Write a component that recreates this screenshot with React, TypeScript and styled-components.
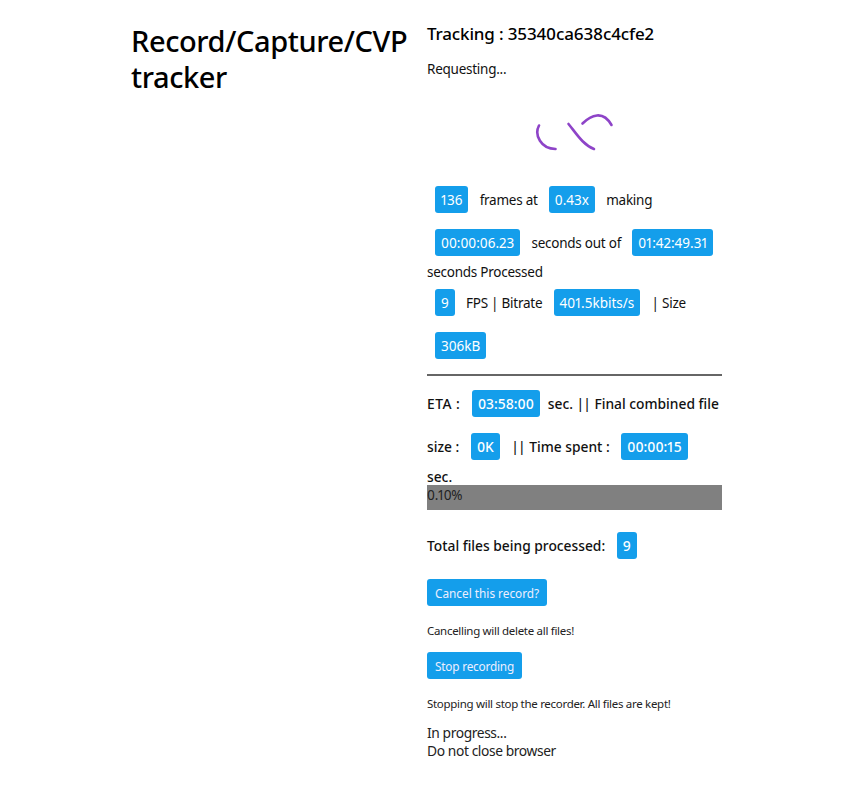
import React from 'react';
import styled, { createGlobalStyle } from 'styled-components';

const GlobalStyle = createGlobalStyle`
  body {
    margin: 0;
    background: #fff;
    color: #111;
    font-family: "Noto Sans", "Open Sans", sans-serif;
    font-size: 13.5px;
    letter-spacing: -0.25px;
    line-height: 20px;
    font-variant-numeric: proportional-nums;
  }
`;

const Page = styled.div`
  display: grid;
  grid-template-columns: 295px 295px;
  justify-content: center;
  padding-top: 23px;
`;

const Title = styled.h1`
  margin: 0 0 0 -1px;
  font-size: 29px;
  letter-spacing: -0.4px;
  line-height: 36px;
  font-weight: 500;
  color: #000;
`;

const Side = styled.div`
  display: flex;
  flex-direction: column;
`;

const Heading = styled.h2`
  margin: 0 0 14px;
  font-size: 17px;
  letter-spacing: -0.15px;
  line-height: 22px;
  font-weight: 500;
  color: #000;
`;

const Note = styled.div`
  line-height: 20px;
`;

const Spinner = styled.svg`
  display: block;
  width: 80px;
  height: 44px;
  margin: 31px auto 24px;
`;

const Stats = styled.div<{ $bold?: boolean }>`
  line-height: 17px;
  font-weight: ${(p) => (p.$bold ? 500 : 400)};
  font-size: ${(p) => (p.$bold ? '13.8px' : '13.5px')};
  letter-spacing: ${(p) => (p.$bold ? '0' : '-0.25px')};
  color: #111;
`;

const Badge = styled.span<{ $bold?: boolean }>`
  display: inline-block;
  margin: 8px;
  padding: 3.5px 6px;
  border-radius: 3px;
  background: #149eeb;
  color: #fff;
  line-height: 20px;
  letter-spacing: 0;
  font-weight: ${(p) => (p.$bold ? 500 : 400)};
`;

const Label = styled.span`
  letter-spacing: 0.5px;
`;

const Bars = styled.span`
  letter-spacing: -1px;
  margin-right: 1px;
`;

const Rule = styled.hr`
  width: 100%;
  margin: 7px 0 6px;
  border: 0;
  border-top: 2px solid #666;
`;

const Progress = styled.div`
  height: 25px;
  background: #808080;
  color: #222;
  line-height: 20px;
`;

const Total = styled.div`
  margin: 14px 0 0;
  font-size: 13.8px;
  letter-spacing: 0;
  font-weight: 500;
`;

const Action = styled.button<{ $tight?: boolean }>`
  display: block;
  padding: 0 8px;
  height: 27px;
  border: 0;
  border-radius: 3px;
  background: #149eeb;
  color: #eef;
  font-family: inherit;
  font-size: 11.8px;
  letter-spacing: ${(p) => (p.$tight ? '-0.2px' : '0')};
`;

const ActionRow = styled.div`
  margin-top: 12px;
`;

const Hint = styled.p`
  margin: 16px 0 0;
  font-size: 11.5px;
  letter-spacing: -0.3px;
  line-height: 18px;
  color: #222;
`;

const Status = styled.div`
  margin-top: 11px;
  font-size: 13.8px;
  letter-spacing: -0.4px;
  line-height: 18px;
  color: #222;
`;

export default function App() {
  return (
    <>
      <GlobalStyle />
      <Page>
        <Title>Record/Capture/CVP tracker</Title>
        <Side>
          <Heading>Tracking : 35340ca638c4cfe2</Heading>
          <Note>Requesting...</Note>
          <Spinner viewBox="0 0 80 44" fill="none" stroke="#8e44c8" strokeWidth="2.6" strokeLinecap="round">
            <path d="M4 15.5C-1 25 6 39 20.5 39" />
            <path d="M33.5 14C41 23 48 35 59 39" />
            <path d="M47.5 13.5C56 5 68 0 76.5 15" />
          </Spinner>
          <Stats>
            <Badge>136</Badge> frames at <Badge>0.43x</Badge> making <Badge>00:00:06.23</Badge> seconds out of{' '}
            <Badge>01:42:49.31</Badge> seconds Processed
          </Stats>
          <Stats>
            <Badge>9</Badge> FPS | Bitrate <Badge>401.5kbits/s</Badge> | Size <Badge>306kB</Badge>
          </Stats>
          <Rule />
          <Stats $bold>
            <Label>ETA :</Label> <Badge $bold>03:58:00</Badge>sec. <Bars>||</Bars> Final combined file size :{' '}
            <Badge $bold>0K</Badge> <Bars>||</Bars> Time spent : <Badge $bold>00:00:15</Badge> sec.
          </Stats>
          <Progress>0.10%</Progress>
          <Total>
            Total files being processed: <Badge $bold>9</Badge>
          </Total>
          <ActionRow>
            <Action>Cancel this record?</Action>
          </ActionRow>
          <Hint>Cancelling will delete all files!</Hint>
          <ActionRow>
            <Action $tight>Stop recording</Action>
          </ActionRow>
          <Hint>Stopping will stop the recorder. All files are kept!</Hint>
          <Status>
            In progress...
            <br />
            Do not close browser
          </Status>
        </Side>
      </Page>
    </>
  );
}
